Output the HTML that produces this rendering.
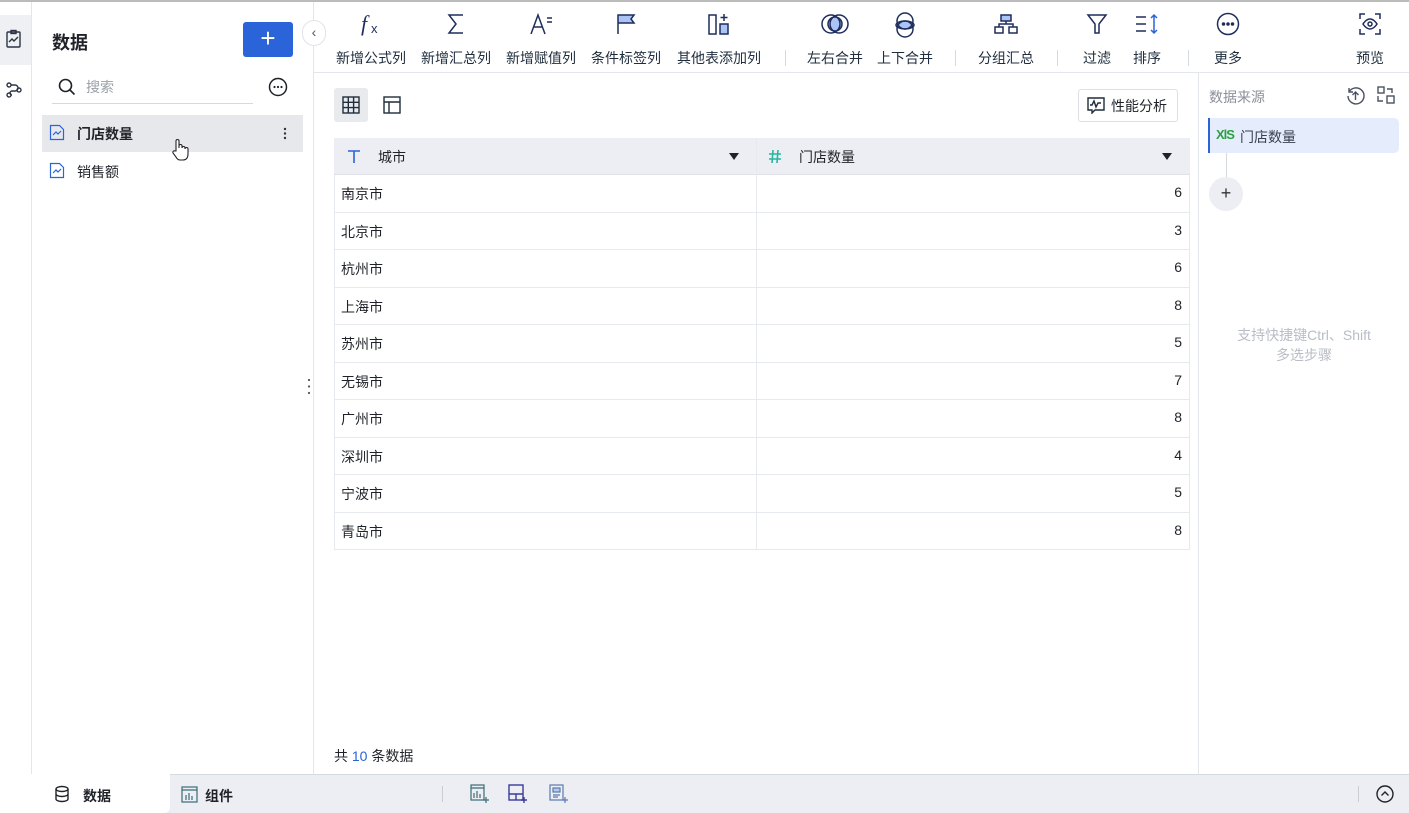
<!DOCTYPE html>
<html><head><meta charset="utf-8"><style>
*{box-sizing:border-box;margin:0;padding:0}
body{width:1409px;height:813px;overflow:hidden;background:#fff;font-family:"Liberation Sans","Noto Sans CJK SC",sans-serif;color:#1f2329;position:relative;font-size:14px}
.abs{position:absolute}
.tb{position:absolute;top:0;text-align:center;font-size:14px;color:#1f2d3d;white-space:nowrap}
.tb svg{position:absolute;top:12px}
.tb span{position:absolute;top:48px;transform:translateX(-50%)}
.sep{position:absolute;top:50px;width:1px;height:16px;background:#d5d9e0}
.row{position:absolute;left:334px;width:856px;height:37.5px;border-bottom:1px solid #e6e9ef;font-size:14px}
.row .c{position:absolute;left:7px;top:9px}
.row .n{position:absolute;right:8px;top:9px}
</style></head><body>
<div class="abs" style="left:0;top:0;width:1409px;height:2px;background:#bbb"></div>
<!-- left rail -->
<div class="abs" style="left:31px;top:2px;width:1px;height:772px;background:#e3e6eb"></div>
<div class="abs" style="left:0;top:15px;width:31px;height:50px;background:#eef0f4"></div>
<svg class="abs" style="left:4px;top:29px" width="20" height="20" viewBox="0 0 20 20" fill="none" stroke="#2b3445" stroke-width="1.4"><rect x="3" y="3" width="13" height="15" rx="1"/><rect x="7" y="1.5" width="5" height="3"/><path d="M5 13l3-3 2 2 4-4"/></svg>
<svg class="abs" style="left:4px;top:80px" width="20" height="20" viewBox="0 0 20 20" fill="none" stroke="#2b3445" stroke-width="1.4"><circle cx="5" cy="5" r="2"/><circle cx="5" cy="15" r="2"/><circle cx="15" cy="10" r="2"/><path d="M7 5h4a3 3 0 010 6H8a2 2 0 000 4h0"/></svg>
<!-- data panel -->
<div class="abs" style="left:313px;top:2px;width:1px;height:772px;background:#e3e6eb"></div>
<div class="abs" style="left:52px;top:29px;font-size:18px;font-weight:bold">数据</div>
<div class="abs" style="left:243px;top:22px;width:50px;height:35px;background:#2b63d9;border-radius:3px;color:#fff;font-size:26px;text-align:center;line-height:33px">+</div>
<div class="abs" style="left:302px;top:20px;width:24px;height:26px;border:1px solid #dfe3ea;border-radius:13px;background:#fff;color:#555;font-size:14px;line-height:22px;text-align:center">‹</div>
<svg class="abs" style="left:57px;top:77px" width="20" height="20" viewBox="0 0 20 20" fill="none" stroke="#1f2329" stroke-width="1.6"><circle cx="8.5" cy="8.5" r="6"/><path d="M13 13l4.5 4.5"/></svg>
<div class="abs" style="left:86px;top:77px;color:#9aa0a8;font-size:14px">搜索</div>
<div class="abs" style="left:52px;top:103px;width:201px;height:1px;background:#d5d9e0"></div>
<svg class="abs" style="left:268px;top:77px" width="20" height="20" viewBox="0 0 20 20"><circle cx="10" cy="10" r="8.5" fill="none" stroke="#1f2329" stroke-width="1.5"/><circle cx="6.5" cy="10" r="1.1" fill="#1f2329"/><circle cx="10" cy="10" r="1.1" fill="#1f2329"/><circle cx="13.5" cy="10" r="1.1" fill="#1f2329"/></svg>
<div class="abs" style="left:42px;top:115px;width:261px;height:37px;background:#e7e8ec"></div>
<svg class="abs" style="left:49px;top:124px" width="16" height="17" viewBox="0 0 16 17" fill="none" stroke="#2b63d9" stroke-width="1.2"><path d="M1.5 1.5h9l4 4v10h-13z"/><path d="M4 11l3-3 2 2 3-3"/></svg>
<div class="abs" style="left:77px;top:124px;font-weight:bold">门店数量</div>
<svg class="abs" style="left:283px;top:127px" width="4" height="13" viewBox="0 0 4 13"><circle cx="2" cy="2" r="1.2" fill="#333"/><circle cx="2" cy="6.5" r="1.2" fill="#333"/><circle cx="2" cy="11" r="1.2" fill="#333"/></svg>
<svg class="abs" style="left:170px;top:138px" width="20" height="24" viewBox="0 0 20 24" fill="#fff" stroke="#222" stroke-width="1.1"><path d="M6 13V3a1.5 1.5 0 013 0v7V8a1.5 1.5 0 013 0v2a1.5 1.5 0 013 0v1a1.5 1.5 0 013 0v5c0 4-2 6-5 6h-3c-2 0-3-1-4-3l-3-4a1.5 1.5 0 012-2z"/></svg>
<svg class="abs" style="left:49px;top:162px" width="16" height="17" viewBox="0 0 16 17" fill="none" stroke="#2b63d9" stroke-width="1.2"><path d="M1.5 1.5h9l4 4v10h-13z"/><path d="M4 11l3-3 2 2 3-3"/></svg>
<div class="abs" style="left:77px;top:162px">销售额</div>
<svg class="abs" style="left:307px;top:378px" width="4" height="17" viewBox="0 0 4 17"><circle cx="2" cy="2" r="1.1" fill="#555"/><circle cx="2" cy="8.5" r="1.1" fill="#555"/><circle cx="2" cy="15" r="1.1" fill="#555"/></svg>
<!-- toolbar -->
<div class="abs" style="left:314px;top:72px;width:1095px;height:1px;background:#e3e6eb"></div>
<div class="tb" style="left:371px"><svg style="left:-12px" width="24" height="24" viewBox="0 0 24 24"><text x="2" y="19" font-size="22" font-style="italic" font-family="Liberation Serif" fill="#1f2d5b">f</text><text x="12" y="21" font-size="13" fill="#1f2d5b">x</text></svg><span>新增公式列</span></div>
<div class="tb" style="left:456px"><svg style="left:-10px" width="20" height="24" viewBox="0 0 20 24" fill="none" stroke="#1f2d5b" stroke-width="1.5"><path d="M17 3H3l7 9-7 9h14"/></svg><span>新增汇总列</span></div>
<div class="tb" style="left:541px"><svg style="left:-12px" width="26" height="24" viewBox="0 0 26 24" fill="none" stroke="#1f2d5b" stroke-width="1.5"><path d="M2 22L9 3l7 19M5 15h8M18 6h5M18 10h5"/></svg><span>新增赋值列</span></div>
<div class="tb" style="left:626px"><svg style="left:-11px" width="22" height="24" viewBox="0 0 22 24" stroke="#1f2d5b" stroke-width="1.5"><path d="M3 22V3h16l-3 4 3 4H3" fill="#a9c4f5"/></svg><span>条件标签列</span></div>
<div class="tb" style="left:719px"><svg style="left:-12px" width="24" height="24" viewBox="0 0 24 24" fill="none" stroke="#1f2d5b" stroke-width="1.5"><rect x="2" y="3" width="7" height="19"/><rect x="13" y="12" width="8" height="10" fill="#a9c4f5"/><path d="M17 2v7M13.5 5.5h7"/></svg><span>其他表添加列</span></div>
<div class="sep" style="left:785px"></div>
<div class="tb" style="left:835px"><svg style="left:-14px" width="28" height="24" viewBox="0 0 28 24" fill="none" stroke="#1f2d5b" stroke-width="1.5"><path d="M14 5a7 7 0 010 14a7 7 0 010-14z" fill="#a9c4f5"/><circle cx="10" cy="12" r="9"/><circle cx="18" cy="12" r="9"/></svg><span>左右合并</span></div>
<div class="tb" style="left:905px"><svg style="left:-12px" width="24" height="26" viewBox="0 0 24 26" fill="none" stroke="#1f2d5b" stroke-width="1.5"><ellipse cx="12" cy="13" rx="9" ry="4" fill="#a9c4f5"/><circle cx="12" cy="9" r="8"/><circle cx="12" cy="17" r="8"/></svg><span>上下合并</span></div>
<div class="sep" style="left:955px"></div>
<div class="tb" style="left:1006px"><svg style="left:-13px" width="26" height="24" viewBox="0 0 26 24" fill="none" stroke="#1f2d5b" stroke-width="1.5"><rect x="8" y="3" width="10" height="6" fill="#a9c4f5"/><rect x="2" y="15" width="8" height="6"/><rect x="16" y="15" width="8" height="6"/><path d="M13 9v3M6 15v-3h14v3"/></svg><span>分组汇总</span></div>
<div class="sep" style="left:1057px"></div>
<div class="tb" style="left:1097px"><svg style="left:-11px" width="22" height="24" viewBox="0 0 22 24" fill="none" stroke="#1f2d5b" stroke-width="1.5"><path d="M2 3h18l-7 9v9h-4v-9z"/></svg><span>过滤</span></div>
<div class="tb" style="left:1147px"><svg style="left:-13px" width="26" height="24" viewBox="0 0 26 24" fill="none" stroke="#1f2d5b" stroke-width="1.5"><path d="M2 5h10M2 12h10M2 19h10"/><path d="M20 3v18M17 6l3-3 3 3M17 18l3 3 3-3" stroke="#2b63d9"/></svg><span>排序</span></div>
<div class="sep" style="left:1188px"></div>
<div class="tb" style="left:1228px"><svg style="left:-12px" width="24" height="24" viewBox="0 0 24 24" fill="none" stroke="#1f2d5b" stroke-width="1.5"><circle cx="12" cy="12" r="10.5"/><circle cx="7.5" cy="12" r="1" fill="#1f2d5b"/><circle cx="12" cy="12" r="1" fill="#1f2d5b"/><circle cx="16.5" cy="12" r="1" fill="#1f2d5b"/></svg><span>更多</span></div>
<div class="tb" style="left:1370px"><svg style="left:-12px" width="24" height="24" viewBox="0 0 24 24" fill="none" stroke="#1f2d5b" stroke-width="1.5"><path d="M2 7V2h5M17 2h5v5M22 17v5h-5M7 22H2v-5"/><path d="M5 12s3-5 7-5 7 5 7 5-3 5-7 5-7-5-7-5z"/><circle cx="12" cy="12" r="2"/></svg><span>预览</span></div>
<!-- view switch -->
<div class="abs" style="left:334px;top:88px;width:34px;height:34px;background:#e8eaee;border-radius:3px"></div>
<svg class="abs" style="left:342px;top:96px" width="18" height="18" viewBox="0 0 18 18" fill="none" stroke="#1f2d3d" stroke-width="1.4"><rect x="1" y="1" width="16" height="16"/><path d="M1 6.3h16M1 11.6h16M6.3 1v16M11.6 1v16"/></svg>
<svg class="abs" style="left:383px;top:96px" width="18" height="18" viewBox="0 0 18 18" fill="none" stroke="#1f2d3d" stroke-width="1.4"><rect x="1" y="1" width="16" height="16"/><path d="M1 6h16M6 6v11"/></svg>
<div class="abs" style="left:1078px;top:89px;width:100px;height:33px;border:1px solid #dcdfe5;border-radius:3px;background:#fff"></div>
<svg class="abs" style="left:1087px;top:97px" width="18" height="17" viewBox="0 0 18 17" fill="none" stroke="#1f2d3d" stroke-width="1.4"><path d="M1 1h16v12H8l-3 3v-3H1z"/><path d="M3 8h2l2-4 2 6 2-4h3"/></svg>
<div class="abs" style="left:1111px;top:96px;font-size:14px">性能分析</div>
<!-- table -->
<div class="abs" style="left:334px;top:138px;width:856px;height:412px;border:1px solid #e6e9ef"></div>
<div class="abs" style="left:334px;top:138px;width:856px;height:37px;background:#eceef3;border-bottom:1px solid #dfe2e8"></div>
<div class="abs" style="left:756px;top:138px;width:1px;height:412px;background:#e6e9ef"></div>
<svg class="abs" style="left:347px;top:150px" width="14" height="13" viewBox="0 0 14 13" fill="none" stroke="#2b63d9" stroke-width="1.6"><path d="M1 1h12M7 1v12"/></svg>
<div class="abs" style="left:378px;top:147px">城市</div>
<svg class="abs" style="left:729px;top:153px" width="10" height="7" viewBox="0 0 10 7"><path d="M0 0h10L5 7z" fill="#1f2329"/></svg>
<svg class="abs" style="left:768px;top:150px" width="14" height="13" viewBox="0 0 14 13" fill="none" stroke="#2ab5a0" stroke-width="1.6"><path d="M5 0L4 13M10 0L9 13M1 4h12M1 9h12"/></svg>
<div class="abs" style="left:799px;top:147px">门店数量</div>
<svg class="abs" style="left:1162px;top:153px" width="10" height="7" viewBox="0 0 10 7"><path d="M0 0h10L5 7z" fill="#1f2329"/></svg>
<div class="row" style="top:175px"><span class="c">南京市</span><span class="n">6</span></div>
<div class="row" style="top:212.5px"><span class="c">北京市</span><span class="n">3</span></div>
<div class="row" style="top:250px"><span class="c">杭州市</span><span class="n">6</span></div>
<div class="row" style="top:287.5px"><span class="c">上海市</span><span class="n">8</span></div>
<div class="row" style="top:325px"><span class="c">苏州市</span><span class="n">5</span></div>
<div class="row" style="top:362.5px"><span class="c">无锡市</span><span class="n">7</span></div>
<div class="row" style="top:400px"><span class="c">广州市</span><span class="n">8</span></div>
<div class="row" style="top:437.5px"><span class="c">深圳市</span><span class="n">4</span></div>
<div class="row" style="top:475px"><span class="c">宁波市</span><span class="n">5</span></div>
<div class="row" style="top:512.5px;border-bottom:none"><span class="c">青岛市</span><span class="n">8</span></div>
<div class="abs" style="left:334px;top:746px;font-size:14px">共 <span style="color:#2b63d9">10</span> 条数据</div>
<!-- right panel -->
<div class="abs" style="left:1198px;top:73px;width:1px;height:701px;background:#e3e6eb"></div>
<div class="abs" style="left:1209px;top:87px;color:#8a9099;font-size:14px">数据来源</div>
<svg class="abs" style="left:1346px;top:86px" width="19" height="19" viewBox="0 0 19 19" fill="none" stroke="#4a5260" stroke-width="1.4"><path d="M3 6a8 8 0 11-1 4M3 2v4h4"/><path d="M9.5 14V6M6.5 9l3-3 3 3"/></svg>
<svg class="abs" style="left:1377px;top:86px" width="18" height="18" viewBox="0 0 18 18" fill="none" stroke="#4a5260" stroke-width="1.4"><rect x="1" y="1" width="6" height="6"/><rect x="10" y="10" width="7" height="7"/><path d="M10 3h5v4M1 10v5h5"/></svg>
<div class="abs" style="left:1208px;top:118px;width:191px;height:35px;background:#e5ecfb;border-left:2px solid #2b63d9;border-radius:0 5px 5px 0"></div>
<div class="abs" style="left:1216px;top:127px;font-size:13px;color:#2ea043;font-weight:bold;letter-spacing:-1px">XlS</div>
<div class="abs" style="left:1240px;top:127px;color:#3a4150">门店数量</div>
<div class="abs" style="left:1226px;top:153px;width:1px;height:25px;background:#d5d9e0"></div>
<div class="abs" style="left:1209px;top:177px;width:34px;height:34px;border-radius:50%;background:#eceef3;text-align:center;line-height:32px;font-size:18px;color:#333">+</div>
<div class="abs" style="left:1199px;top:325px;width:210px;text-align:center;color:#b8bdc6;font-size:14px;line-height:20px">支持快捷键Ctrl、Shift<br>多选步骤</div>
<!-- bottom bar -->
<div class="abs" style="left:0;top:774px;width:1409px;height:39px;background:#eceef3;border-top:1px solid #d5d9e0"></div>
<div class="abs" style="left:0;top:774px;width:170px;height:39px;background:#fff;border-radius:0 0 6px 0"></div>
<svg class="abs" style="left:54px;top:785px" width="16" height="18" viewBox="0 0 16 18" fill="none" stroke="#1f2329" stroke-width="1.4"><ellipse cx="8" cy="4" rx="6" ry="2.5"/><path d="M2 4v10c0 1.4 2.7 2.5 6 2.5s6-1.1 6-2.5V4M2 9c0 1.4 2.7 2.5 6 2.5s6-1.1 6-2.5"/></svg>
<div class="abs" style="left:83px;top:786px;font-weight:bold">数据</div>
<svg class="abs" style="left:181px;top:786px" width="17" height="17" viewBox="0 0 17 17" fill="none" stroke="#3a6b78" stroke-width="1.2"><rect x="1" y="1" width="15" height="15"/><path d="M1 4h15M5 14V9M8 14V7M11 14V10"/></svg>
<div class="abs" style="left:205px;top:786px;font-weight:bold">组件</div>
<div class="abs" style="left:442px;top:786px;width:1px;height:16px;background:#c9ced6"></div>
<svg class="abs" style="left:470px;top:784px" width="20" height="20" viewBox="0 0 20 20" fill="none" stroke="#3a6b78" stroke-width="1.2"><rect x="1" y="1" width="13" height="15"/><path d="M1 4h13M4 14V9M7 14V7M10 14V10M16 13v6M13 16h6" /></svg>
<svg class="abs" style="left:508px;top:784px" width="20" height="20" viewBox="0 0 20 20" fill="none" stroke="#3b3b9a" stroke-width="1.4"><rect x="1" y="1" width="14" height="15"/><path d="M1 10h14M8 10v6M16 13v6M13 16h6"/></svg>
<svg class="abs" style="left:549px;top:784px" width="20" height="20" viewBox="0 0 20 20" fill="none" stroke="#5a7ab0" stroke-width="1.2"><rect x="1" y="1" width="13" height="15"/><rect x="4" y="4" width="7" height="4" fill="#b8c8e8"/><path d="M4 11h7M4 13h5M16 13v6M13 16h6"/></svg>
<div class="abs" style="left:1358px;top:786px;width:1px;height:16px;background:#c9ced6"></div>
<svg class="abs" style="left:1376px;top:785px" width="18" height="18" viewBox="0 0 18 18" fill="none" stroke="#1f2329" stroke-width="1.4"><circle cx="9" cy="9" r="8"/><path d="M5.5 10.5L9 7l3.5 3.5"/></svg>
</body></html>
